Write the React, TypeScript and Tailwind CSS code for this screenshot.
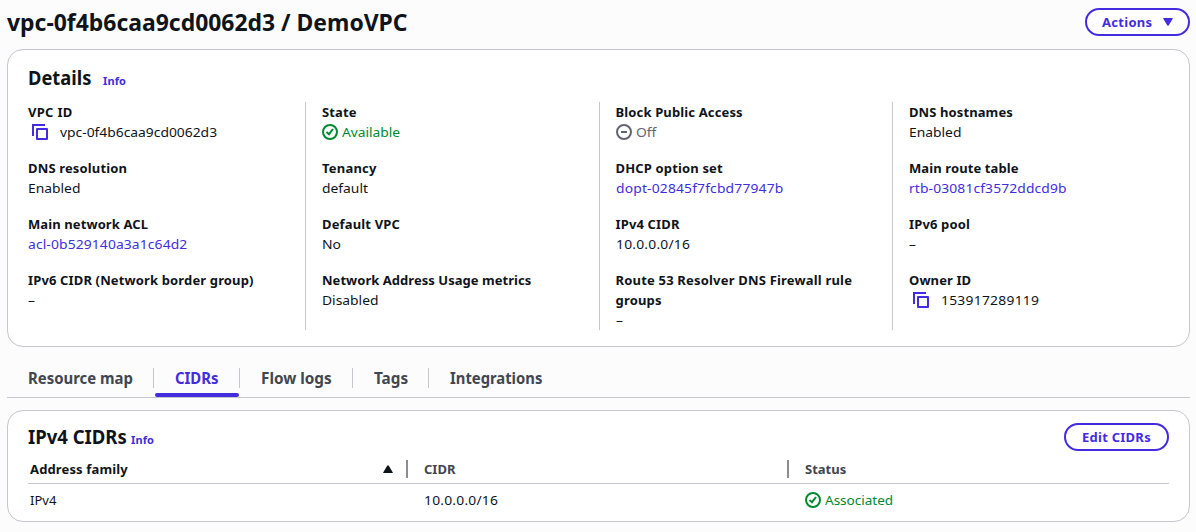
import React from 'react';

function CopyIcon() {
  return (
    <svg width="16" height="16" viewBox="0 0 16 16" fill="none" stroke="#432ce0" strokeWidth="2" className="ml-1 mr-3 shrink-0">
      <path d="M1 12V1h12" />
      <path d="M5 5h10v10H5z" strokeLinejoin="round" />
    </svg>
  );
}

function CheckIcon() {
  return (
    <svg width="16" height="16" viewBox="0 0 16 16" fill="none" stroke="currentColor" strokeWidth="2" className="mr-1 shrink-0">
      <circle cx="8" cy="8" r="7" />
      <path d="m4.5 8 2.5 2.2L11 5" />
    </svg>
  );
}

function OffIcon() {
  return (
    <svg width="16" height="16" viewBox="0 0 16 16" fill="none" stroke="currentColor" strokeWidth="2" className="mr-1 shrink-0">
      <circle cx="8" cy="8" r="7" />
      <path d="M5 8h6" />
    </svg>
  );
}

type Kind = 'text' | 'link' | 'copy' | 'ok' | 'off';
type Item = { label: string; value: string; kind?: Kind; labelTrack?: string; track?: string };

const columns: Item[][] = [
  [
    { label: 'VPC ID', value: 'vpc-0f4b6caa9cd0062d3', kind: 'copy', labelTrack: 'tracking-[0.3px]' },
    { label: 'DNS resolution', value: 'Enabled', labelTrack: 'tracking-[0.15px]' },
    { label: 'Main network ACL', value: 'acl-0b529140a3a1c64d2', kind: 'link', track: 'tracking-[0.12px]' },
    { label: 'IPv6 CIDR (Network border group)', value: '–', labelTrack: 'tracking-[0.14px]' },
  ],
  [
    { label: 'State', value: 'Available', kind: 'ok', track: 'tracking-[-0.05px]' },
    { label: 'Tenancy', value: 'default', labelTrack: 'tracking-[0.2px]' },
    { label: 'Default VPC', value: 'No', track: 'tracking-normal', labelTrack: 'tracking-[0.15px]' },
    { label: 'Network Address Usage metrics', value: 'Disabled', labelTrack: 'tracking-[0.04px]' },
  ],
  [
    { label: 'Block Public Access', value: 'Off', kind: 'off', labelTrack: 'tracking-[0.14px]' },
    { label: 'DHCP option set', value: 'dopt-02845f7fcbd77947b', kind: 'link', track: 'tracking-[0.16px]', labelTrack: 'tracking-[0.15px]' },
    { label: 'IPv4 CIDR', value: '10.0.0.0/16', track: 'tracking-[0.2px]', labelTrack: 'tracking-[0.15px]' },
    { label: 'Route 53 Resolver DNS Firewall rule groups', value: '–', labelTrack: 'tracking-[0.19px]' },
  ],
  [
    { label: 'DNS hostnames', value: 'Enabled' },
    { label: 'Main route table', value: 'rtb-03081cf3572ddcd9b', kind: 'link', track: 'tracking-[0.12px]' },
    { label: 'IPv6 pool', value: '–', labelTrack: 'tracking-[0.15px]' },
    { label: 'Owner ID', value: '153917289119', kind: 'copy', track: 'tracking-[0.25px]' },
  ],
];

const tones: Record<Kind, string> = {
  text: 'text-[#0f141a]',
  copy: 'text-[#0f141a]',
  link: 'text-[#432ce0]',
  ok: 'text-[#008a32]',
  off: 'text-[#656571]',
};

function Field({ label, value, kind = 'text', labelTrack = 'tracking-[0.1px]', track = 'tracking-normal' }: Item) {
  return (
    <div>
      <div className={`font-bold ${labelTrack}`}>{label}</div>
      <div className={`flex h-5 items-center ${track} ${tones[kind]}`}>
        {kind === 'copy' && <CopyIcon />}
        {kind === 'ok' && <CheckIcon />}
        {kind === 'off' && <OffIcon />}
        <span className="origin-left scale-x-[1.065]">{value}</span>
      </div>
    </div>
  );
}

export default function App() {
  return (
    <div className="h-[532px] overflow-hidden bg-[#fcfcfd] pl-[7px] pr-[6px] font-['Noto_Sans',sans-serif] text-[13px] leading-5 text-[#0f141a]">
      <header className="flex h-[49px] items-start justify-between">
        <h1 className="mt-[7px] origin-left scale-x-[0.955] text-[24px] font-bold leading-[30px]">vpc-0f4b6caa9cd0062d3 / DemoVPC</h1>
        <button className="mt-2 flex h-7 w-[105px] items-center rounded-full border-2 border-[#432ce0] bg-white pl-[15px] font-bold tracking-[0.3px] text-[#432ce0]">
          <span>Actions</span>
          <svg width="10" height="8" viewBox="0 0 10 8" className="ml-[11px]"><path d="M.8 0h8.4q1 0 .5.8L5.8 7.3q-.8 1.1-1.6 0L.3.8Q-.2 0 .8 0z" fill="#432ce0" /></svg>
        </button>
      </header>

      <section className="h-[298px] rounded-2xl border border-[#c6c6cd] bg-white px-5 pt-[15px]">
        <div className="flex h-[37px] items-baseline">
          <h2 className="w-[63px] origin-left scale-x-[0.915] whitespace-nowrap text-[20px] font-bold leading-[25px]">Details</h2>
          <a className="ml-3 text-[11px] font-bold tracking-[0.1px] text-[#432ce0]">Info</a>
        </div>
        <div className="flex">
          {columns.map((items, i) => (
            <div key={i} className={i === 0 ? 'flex h-[228px] w-[277px] shrink-0 flex-col gap-4' : 'flex h-[228px] w-[293.5px] shrink-0 flex-col gap-4 border-l border-[#c6c6cd] pl-4 pr-4'}>
              {items.map((item) => <Field key={item.label} {...item} />)}
            </div>
          ))}
        </div>
      </section>

      <nav className="mt-[18px] flex h-[33px] items-start border-b border-[#c6c6cd] text-[16px] font-bold leading-5 text-[#424650]">
        <div className="mt-[3px] w-[147px] border-r border-[#c6c6cd] pl-[21px]"><span className="inline-block origin-left scale-x-[0.932] whitespace-nowrap">Resource map</span></div>
        <div className="flex w-[86px] flex-col pl-px">
          <div className="mt-[3px] h-5 border-r border-[#c6c6cd] pl-5 text-[#432ce0]"><span className="inline-block origin-left scale-x-[0.932] whitespace-nowrap">CIDRs</span></div>
          <div className="mt-[5px] h-1 w-[84px] rounded-[2px] bg-[#432ce0]" />
        </div>
        <div className="mt-[3px] w-[113px] border-r border-[#c6c6cd] pl-[21px]"><span className="inline-block origin-left scale-x-[0.955] whitespace-nowrap">Flow logs</span></div>
        <div className="mt-[3px] w-[76px] border-r border-[#c6c6cd] pl-[21px]"><span className="inline-block origin-left scale-x-[0.955] whitespace-nowrap">Tags</span></div>
        <div className="mt-[3px] pl-[21px]"><span className="inline-block origin-left scale-x-[0.925] whitespace-nowrap">Integrations</span></div>
      </nav>

      <section className="mt-3 h-[112px] rounded-2xl border border-[#c6c6cd] bg-white px-5 pt-3">
        <div className="flex h-9 items-start justify-between">
          <div className="flex items-baseline">
            <h2 className="mt-px w-[99px] origin-left scale-x-[0.925] whitespace-nowrap text-[20px] font-bold leading-[25px]">IPv4 CIDRs</h2>
            <a className="ml-1 text-[11px] font-bold tracking-[0.1px] text-[#432ce0]">Info</a>
          </div>
          <button className="flex h-7 w-[105px] items-center justify-center rounded-full border-2 border-[#432ce0] bg-white font-bold tracking-[0.25px] text-[#432ce0]">Edit CIDRs</button>
        </div>
        <div className="flex h-[25px] items-start border-b border-[#c6c6cd] font-bold text-[#424650]">
          <div className="mt-px flex h-[18px] w-[380px] items-center justify-between border-r-2 border-[#8c8c94] pl-[2px] pr-[13px] tracking-[0.14px] text-[#0f141a]">
            <span>Address family</span>
            <svg width="10" height="8" viewBox="0 0 10 8"><path d="M.8 8h8.4q1 0 .5-.8L5.8.7Q5-.4 4.2.7L.3 7.2Q-.2 8 .8 8z" fill="#0f141a" /></svg>
          </div>
          <div className="mt-px flex h-[18px] w-[381px] items-center border-r-2 border-[#8c8c94] pl-4">CIDR</div>
          <div className="mt-px flex h-[18px] items-center pl-4">Status</div>
        </div>
        <div className="flex h-8 items-center">
          <div className="w-[396px] pl-[2px]">IPv4</div>
          <div className="w-[381px] tracking-[0.2px]"><span className="inline-block origin-left scale-x-[1.065]">10.0.0.0/16</span></div>
          <div className="flex items-center text-[#008a32]"><CheckIcon /><span className="origin-left scale-x-[1.04]">Associated</span></div>
        </div>
      </section>
    </div>
  );
}
